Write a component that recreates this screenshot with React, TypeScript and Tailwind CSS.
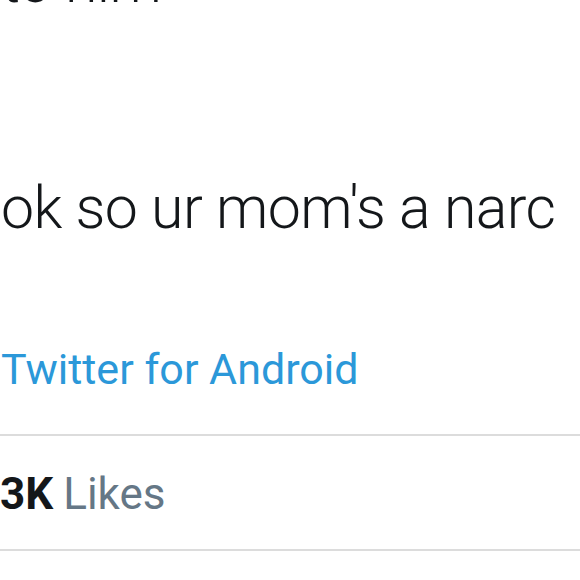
const App = () => {
  return (
    <div className="h-[580px] w-[580px] overflow-hidden bg-white font-['Roboto',sans-serif] text-[#14171a]">
      <div className="pl-[1px]">
        {/* tweet body, first line is cut off at the top */}
        <p className="mt-[-55px] text-[59px] font-light leading-[74px] tracking-[-0.6px]">to him</p>
        <p className="mt-[152px] text-[59px] font-light leading-[74px] tracking-[-0.6px]">ok so ur mom's a narc</p>

        <p className="mt-[98px] text-[43px] leading-[52px] text-[#2b98d9]">Twitter for Android</p>
      </div>

      <div className="mt-[39px] h-[2px] bg-[#dcdcdc]" />

      <div className="mt-[31px] flex items-baseline gap-[10px] text-[44px] leading-[54px]">
        <span className="font-bold">3K</span>
        <span className="text-[#657786]">Likes</span>
      </div>

      <div className="mt-[28px] h-[2px] bg-[#dcdcdc]" />
    </div>
  );
};

export default App;
